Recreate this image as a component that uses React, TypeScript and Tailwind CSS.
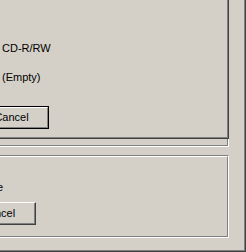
import React from "react";

export default function App() {
  return (
    <div className="w-[246px] h-[252px] bg-[#d4d0c8] border-r border-b border-[#404040] overflow-hidden font-['Liberation_Sans',Arial,sans-serif] text-[11px] leading-[13px] text-black">
      <div className="h-full border-r border-b border-[#808080]">
        <div className="w-[229px]">
          {/* top raised panel */}
          <div className="h-[139px] border-r border-b border-[#404040]">
            <div className="h-full border-r border-b border-[#808080] flex flex-col pt-[42px]">
              <div className="pl-[2px] whitespace-nowrap">CD-R/RW</div>
              <div className="pl-[2px] mt-[16px] whitespace-nowrap">(Empty)</div>
              <div className="mt-[22px] -ml-[26px] w-[75px] h-[23px] border border-black">
                <div className="h-full border-t border-l border-r border-b border-t-white border-l-white border-r-[#808080] border-b-[#808080] flex items-center justify-center">
                  Cancel
                </div>
              </div>
            </div>
          </div>
          {/* etched strip */}
          <div className="h-[8px] border-r border-b border-white">
            <div className="h-full border-r border-b border-[#808080]" />
          </div>
          {/* group box */}
          <div className="mt-[8px] h-[83px] border-t border-r border-b border-t-[#808080] border-r-white border-b-white">
            <div className="h-full border-t border-r border-b border-t-white border-r-[#808080] border-b-[#808080] flex flex-col">
              <div className="mt-[24px] -ml-[3px] whitespace-nowrap">e</div>
              <div className="mt-[8px] -ml-[39px] w-[75px] h-[23px] border-t border-l border-r border-b border-t-white border-l-white border-r-[#404040] border-b-[#404040]">
                <div className="h-full border-r border-b border-[#808080] flex items-center justify-center">
                  Cancel
                </div>
              </div>
            </div>
          </div>
        </div>
      </div>
    </div>
  );
}
